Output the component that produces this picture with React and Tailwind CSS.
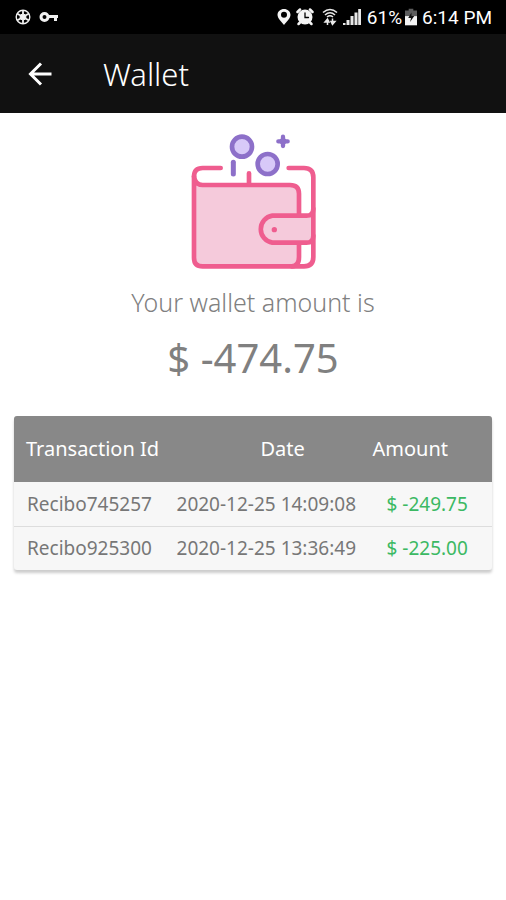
const transactions = [
  { id: 'Recibo745257', date: '2020-12-25 14:09:08', amount: '$ -249.75' },
  { id: 'Recibo925300', date: '2020-12-25 13:36:49', amount: '$ -225.00' },
]

function StatusBar() {
  return (
    <div className="flex h-[34px] items-center justify-between bg-black pr-[14px] pl-[15px] text-white">
      <div className="flex items-center gap-2">
        <svg className="h-4 w-4" viewBox="0 0 16 16" fill="none" stroke="#f0f0f0">
          <circle cx="8" cy="8" r="6.8" strokeWidth="1.4" />
          <circle cx="8" cy="8" r="3" fill="#f0f0f0" strokeWidth="1" />
          <path d="M8 1v4M14 4.5l-3.5 2M14 11.5l-3.5-2M8 15v-4M2 11.5l3.5-2M2 4.5l3.5 2" strokeWidth="1.8" />
        </svg>
        <svg className="h-3 w-5" viewBox="0 0 20 12" fill="none" stroke="#f0f0f0">
          <circle cx="5.5" cy="6" r="3.5" strokeWidth="3" />
          <path d="M9 5.5h10M16.5 5v5" strokeWidth="3" />
        </svg>
      </div>
      <div className="flex items-center">
        <svg className="h-[18px] w-[14px]" viewBox="0 0 14 18" fill="#f4f4f4" fillRule="evenodd">
          <path d="M7 1C3.500 1 .5 3.600 .5 6.800C.5 10.500 4.500 13.500 7 17C9.500 13.500 13.500 10.500 13.500 6.800C13.500 3.600 10.500 1 7 1ZM7 3.800A3 3 0 1 1 7 9.800A3 3 0 1 1 7 3.800Z" />
        </svg>
        <svg className="ml-[5px] h-[18px] w-[18px]" viewBox="0 0 18 18" fill="none" stroke="#f4f4f4" strokeLinecap="round">
          <circle cx="9" cy="9" r="7.5" fill="#f4f4f4" stroke="none" />
          <path d="M1.500 4l2.500-2.500M16.500 4l-2.500-2.500" strokeWidth="2.500" />
          <path d="M4 14.500l-1.500 1.500M14 14.500l1.500 1.500" strokeWidth="2.500" />
          <path d="M9 5v4.500h3.500" stroke="#000" strokeWidth="1.300" />
        </svg>
        <svg className="ml-[8px] h-[18px] w-4" viewBox="0 0 16 18" fill="none" stroke="#e8e8e8">
          <path d="M1 4.500Q8-1.500 15 4.500M3 7Q8 2.500 13 7M5 9Q8 6.500 11 9" strokeWidth="1.600" />
          <path d="M3 14l2.500-3l1.500 3zM5.500 12.500v4.500" fill="#e8e8e8" strokeWidth="1.500" />
          <path d="M9 13.500l1.500 3l2.500-3zM10.500 10.500v4" fill="#e8e8e8" strokeWidth="1.500" />
        </svg>
        <svg className="ml-[5px] h-[18px] w-[18px]" viewBox="0 0 18 18" fill="#e8e8e8">
          <path d="M0 15h2.500v2H0zM3.500 12h3v5h-3zM7.500 8h3v9h-3zM11.500 4.500h3v12.500h-3zM15.200 1h2.800v16h-2.800z" />
        </svg>
        <span className="ml-[6px] font-[Roboto] text-[19px] leading-none">61%</span>
        <svg className="ml-[3px] h-[18px] w-[12px]" viewBox="0 0 13 18">
          <path d="M4 0h5v2h4v6H0V2h4z" fill="#5c5c5c" />
          <path d="M0 8h13v10H0z" fill="#f4f4f4" />
          <path d="M7 4L3.500 10h3L5.500 14.500L10 8H7z" fill="#111" />
        </svg>
        <span className="ml-[5px] font-[Roboto] text-[19px] leading-none">6:14 PM</span>
      </div>
    </div>
  )
}

function WalletArt() {
  return (
    <svg className="h-[137px] w-32" viewBox="57 38 384 411" fill="none" strokeLinecap="round" strokeLinejoin="round" aria-hidden="true">
      <g stroke="#8d70c9">
        <circle cx="216" cy="79" r="30" fill="#d8c9f8" strokeWidth="14" />
        <circle cx="293" cy="131" r="30" fill="#d8c9f8" strokeWidth="14" />
        <path d="M190 126v35" strokeWidth="15" />
        <path d="M339 49v28M325 63h28" strokeWidth="13" />
        <path d="M339 52L350 63L339 74L328 63Z" strokeWidth="5" fill="#8d70c9" />
      </g>
      <g stroke="#ef5d8f" strokeWidth="14">
        <path d="M72 168Q75 194 98 194H360Q387 194 387 220V410Q387 438 365 438H98Q72 438 72 412Z" fill="#f5cadb" />
        <path d="M430 265Q430 286 409 286H307A41 41 0 0 0 307 367H409Q430 367 430 346Z" fill="#f5cadb" stroke="none" />
        <path d="M430 265Q430 286 409 286H307A41 41 0 0 0 307 367H409Q430 367 430 346" />
        <path d="M152 143H98Q72 143 72 169M356 143H402Q430 143 430 171V410Q430 438 402 438H365M237 159v30" />
      </g>
      <circle cx="313" cy="328" r="8" fill="#ef5d8f" />
    </svg>
  )
}

export default function App() {
  return (
    <div className="min-h-screen bg-white font-['Noto_Sans',sans-serif] text-[#808080]">
      <StatusBar />
      <header className="flex h-[79px] items-center bg-[#111111] pl-7 text-white">
        <button type="button" aria-label="Back" className="flex h-6 w-6 items-center justify-center">
          <svg className="h-6 w-6" viewBox="0 0 24 24" fill="none" stroke="currentColor" strokeWidth="3">
            <path d="M23.500 12H3M13 1.500L2.500 12L13 22.500" />
          </svg>
        </button>
        <h1 className="ml-[51px] text-[31px] leading-10 font-light">Wallet</h1>
      </header>
      <main className="px-[14px] pt-5">
        <section className="flex flex-col items-center">
          <WalletArt />
          <p className="mt-4 text-[25px] leading-8 font-light">Your wallet amount is</p>
          <p className="mt-4 text-[40px] leading-12">$ -474.75</p>
        </section>
        <table className="mt-[34px] w-full table-fixed border-separate border-spacing-0 rounded-[3px] bg-[#f7f7f7] text-left shadow-[0_3px_3px_rgba(0,0,0,0.2)]">
          <thead className="bg-[#888888] text-[20px] text-white">
            <tr className="h-[66px]">
              <th className="w-[34%] rounded-tl-[3px] pl-3 font-normal whitespace-nowrap">Transaction Id</th>
              <th className="w-[41%] pl-[84px] font-normal">Date</th>
              <th className="w-[25%] rounded-tr-[3px] font-normal">Amount</th>
            </tr>
          </thead>
          <tbody className="text-[19px] whitespace-nowrap text-[#777777] [&>tr+tr>td]:border-t [&>tr+tr>td]:border-[#dddddd]">
            {transactions.map((t) => (
              <tr key={t.id} className="h-11">
                <td className="pl-[13px]">{t.id}</td>
                <td>{t.date}</td>
                <td className="pl-[14px] text-[#3cb963]">{t.amount}</td>
              </tr>
            ))}
          </tbody>
        </table>
      </main>
    </div>
  )
}
